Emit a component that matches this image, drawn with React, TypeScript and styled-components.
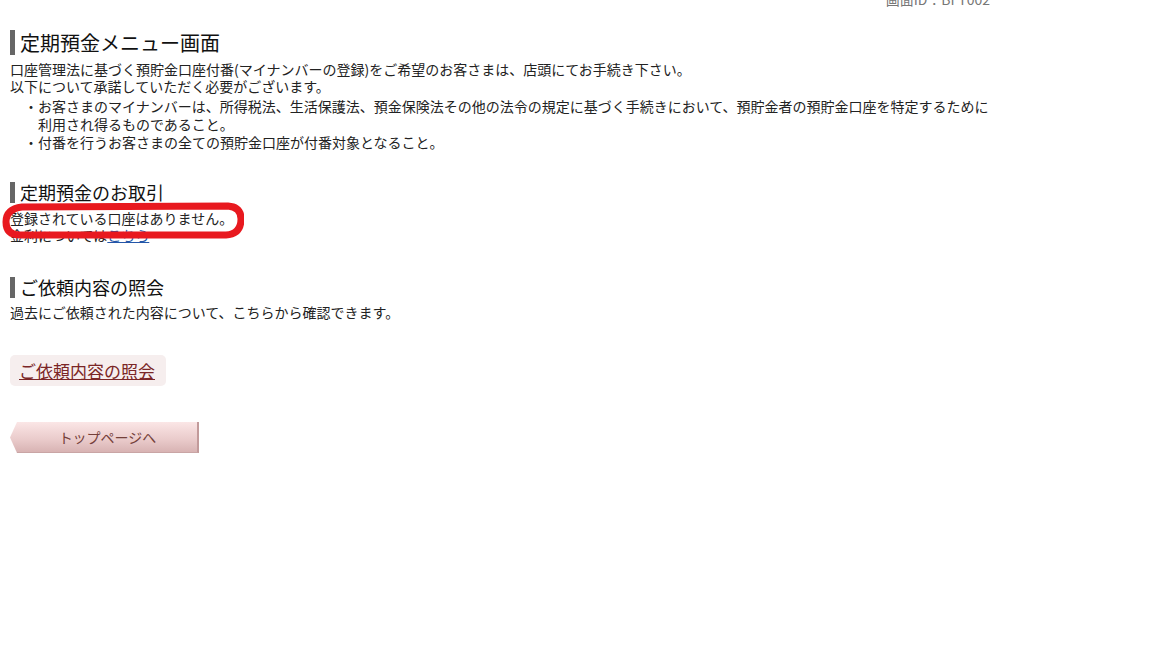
import styled, { createGlobalStyle } from "styled-components";

const GlobalStyle = createGlobalStyle`
  html, body {
    margin: 0;
    padding: 0;
    background: #fff;
  }
  body {
    font-family: "Noto Sans CJK JP", "Noto Sans", sans-serif;
    color: #222;
  }
`;

const Page = styled.div`
  width: 982px;
  padding-left: 10px;
  display: flex;
  flex-direction: column;
`;

const ScreenIdBar = styled.div`
  height: 8px;
  overflow: hidden;
  display: flex;
  justify-content: flex-end;
  align-items: flex-end;
  padding-right: 2px;
`;

const ScreenId = styled.span`
  font-size: 14px;
  line-height: 17px;
  color: #777;
  flex: none;
`;

const Section = styled.section<{ $top: number }>`
  margin-top: ${(p) => p.$top}px;
  display: flex;
  flex-direction: column;
`;

const Heading = styled.h2<{ $big?: boolean }>`
  margin: 0;
  border-left: 5px solid #666;
  padding-left: 5px;
  font-weight: normal;
  color: #111;
  font-size: ${(p) => (p.$big ? 20 : 18)}px;
  line-height: ${(p) => (p.$big ? 25 : 21)}px;
`;

const Text = styled.p<{ $top?: number }>`
  margin: ${(p) => p.$top ?? 0}px 0 0;
  font-size: 14px;
  line-height: 17px;
`;

const Notes = styled.ul`
  margin: 2px 0 0;
  padding: 0 0 0 14px;
  list-style: none;
  font-size: 14px;
  line-height: 18px;
`;

const Note = styled.li`
  padding-left: 14px;
  text-indent: -14px;
`;

const Marked = styled.div`
  position: relative;
  margin-top: 7px;
`;

const Mark = styled.svg`
  position: absolute;
  left: -8px;
  top: -9px;
  width: 242px;
  height: 40px;
  pointer-events: none;
`;

const Link = styled.a`
  color: #2456a8;
  text-decoration: underline;
`;

const InquiryButton = styled.a`
  margin-top: 34px;
  align-self: flex-start;
  width: 156px;
  height: 31px;
  box-sizing: border-box;
  padding-left: 9px;
  display: flex;
  align-items: center;
  background: #f6eeee;
  border-radius: 5px;
  color: #7b2626;
  font-size: 17px;
  text-decoration: underline;
`;

const TopButton = styled.button`
  margin-top: 36px;
  align-self: flex-start;
  width: 189px;
  height: 31px;
  padding: 0 0 0 8px;
  border: none;
  border-right: 2px solid #c29a9a;
  border-bottom: 1px solid #c9a5a5;
  clip-path: polygon(7px 0, 100% 0, 100% 100%, 7px 100%, 0 50%);
  background: linear-gradient(#fbe6e6, #e9caca 60%, #d8b3b3);
  color: #74403a;
  font-family: "Noto Sans CJK JP", sans-serif;
  font-size: 14px;
  cursor: pointer;
`;

export default function App() {
  return (
    <>
      <GlobalStyle />
      <Page>
        <ScreenIdBar>
          <ScreenId>画面ID：BFT002</ScreenId>
        </ScreenIdBar>

        <Section $top={22}>
          <Heading $big>定期預金メニュー画面</Heading>
          <Text $top={6}>
            口座管理法に基づく預貯金口座付番(マイナンバーの登録)をご希望のお客さまは、店頭にてお手続き下さい。
            <br />
            以下について承諾していただく必要がございます。
          </Text>
          <Notes>
            <Note>
              ・お客さまのマイナンバーは、所得税法、生活保護法、預金保険法その他の法令の規定に基づく手続きにおいて、預貯金者の預貯金口座を特定するために利用され得るものであること。
            </Note>
            <Note>・付番を行うお客さまの全ての預貯金口座が付番対象となること。</Note>
          </Notes>
        </Section>

        <Section $top={31}>
          <Heading>定期預金のお取引</Heading>
          <Marked>
            <Text>登録されている口座はありません。</Text>
            <Text>
              金利については<Link href="#">こちら</Link>
            </Text>
            <Mark viewBox="0 0 242 40">
              <path
                d="M20 6 L226 5 Q239 6 239 18 Q239 33 224 34 L18 34 Q4 34 4 21 Q4 8 20 6 Z"
                fill="none"
                stroke="#e8191f"
                strokeWidth="7"
                strokeLinejoin="round"
              />
            </Mark>
          </Marked>
        </Section>

        <Section $top={33}>
          <Heading>ご依頼内容の照会</Heading>
          <Text $top={6}>過去にご依頼された内容について、こちらから確認できます。</Text>
        </Section>

        <InquiryButton href="#">ご依頼内容の照会</InquiryButton>
        <TopButton type="button">トップページへ</TopButton>
      </Page>
    </>
  );
}
